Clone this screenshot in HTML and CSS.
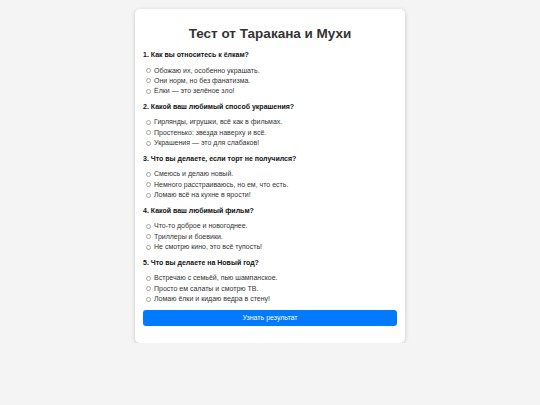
FILE: index.html
```html
<!DOCTYPE html>
<html lang="ru">
<head>
    <meta charset="UTF-8">
    <meta name="viewport" content="width=device-width, initial-scale=1.0">
    <title>Тест от Таракана и Мухи</title>
    <link rel="stylesheet" href="styles.css">
</head>
<body>
    <div class="container">
        <h1>Тест от Таракана и Мухи</h1>

        <div class="question">
            <h3>1. Как вы относитесь к ёлкам?</h3>
            <label class="option"><input type="radio" name="q1"> Обожаю их, особенно украшать.</label>
            <label class="option"><input type="radio" name="q1"> Они норм, но без фанатизма.</label>
            <label class="option"><input type="radio" name="q1"> Ёлки — это зелёное зло!</label>
        </div>

        <div class="question">
            <h3>2. Какой ваш любимый способ украшения?</h3>
            <label class="option"><input type="radio" name="q2"> Гирлянды, игрушки, всё как в фильмах.</label>
            <label class="option"><input type="radio" name="q2"> Простенько: звезда наверху и всё.</label>
            <label class="option"><input type="radio" name="q2"> Украшения — это для слабаков!</label>
        </div>

        <div class="question">
            <h3>3. Что вы делаете, если торт не получился?</h3>
            <label class="option"><input type="radio" name="q3"> Смеюсь и делаю новый.</label>
            <label class="option"><input type="radio" name="q3"> Немного расстраиваюсь, но ем, что есть.</label>
            <label class="option"><input type="radio" name="q3"> Ломаю всё на кухне в ярости!</label>
        </div>

        <div class="question">
            <h3>4. Какой ваш любимый фильм?</h3>
            <label class="option"><input type="radio" name="q4"> Что-то доброе и новогоднее.</label>
            <label class="option"><input type="radio" name="q4"> Триллеры и боевики.</label>
            <label class="option"><input type="radio" name="q4"> Не смотрю кино, это всё тупость!</label>
        </div>

        <div class="question">
            <h3>5. Что вы делаете на Новый год?</h3>
            <label class="option"><input type="radio" name="q5"> Встречаю с семьёй, пью шампанское.</label>
            <label class="option"><input type="radio" name="q5"> Просто ем салаты и смотрю ТВ.</label>
            <label class="option"><input type="radio" name="q5"> Ломаю ёлки и кидаю ведра в стену!</label>
        </div>

        <button class="submit-btn">Узнать результат</button>
    </div>
</body>
</html>
```

FILE: styles.css
```css
* {
    margin: 0;
    padding: 0;
    box-sizing: border-box;
}

body {
    font-family: 'Liberation Sans', Arial, sans-serif;
    background: #f4f4f4;
    color: #333;
    padding-top: 9px;
}

.container {
    width: 270px;
    margin: 0 auto;
    background: white;
    border-radius: 5px;
    box-shadow: 0 1px 4px rgba(0,0,0,0.18);
    padding: 17px 8px 17px;
}

h1 {
    font-size: 13.5px;
    line-height: 16px;
    text-align: center;
    color: #333;
    margin-bottom: 8px;
}

.question {
    margin-bottom: 5.6px;
}

.question h3 {
    font-size: 7px;
    line-height: 10px;
    color: #111;
    margin-bottom: 5.5px;
}

.option {
    display: flex;
    align-items: center;
    font-size: 7px;
    line-height: 10.3px;
    color: #333;
}

.option input {
    appearance: none;
    width: 5px;
    height: 5px;
    border: 1px solid #aaa;
    border-radius: 50%;
    margin: 0 3px 0 3px;
}

.submit-btn {
    display: block;
    width: 100%;
    height: 16px;
    margin-top: 4px;
    background: #007bff;
    color: white;
    border: none;
    border-radius: 3px;
    font-family: inherit;
    font-size: 7px;
}
```
